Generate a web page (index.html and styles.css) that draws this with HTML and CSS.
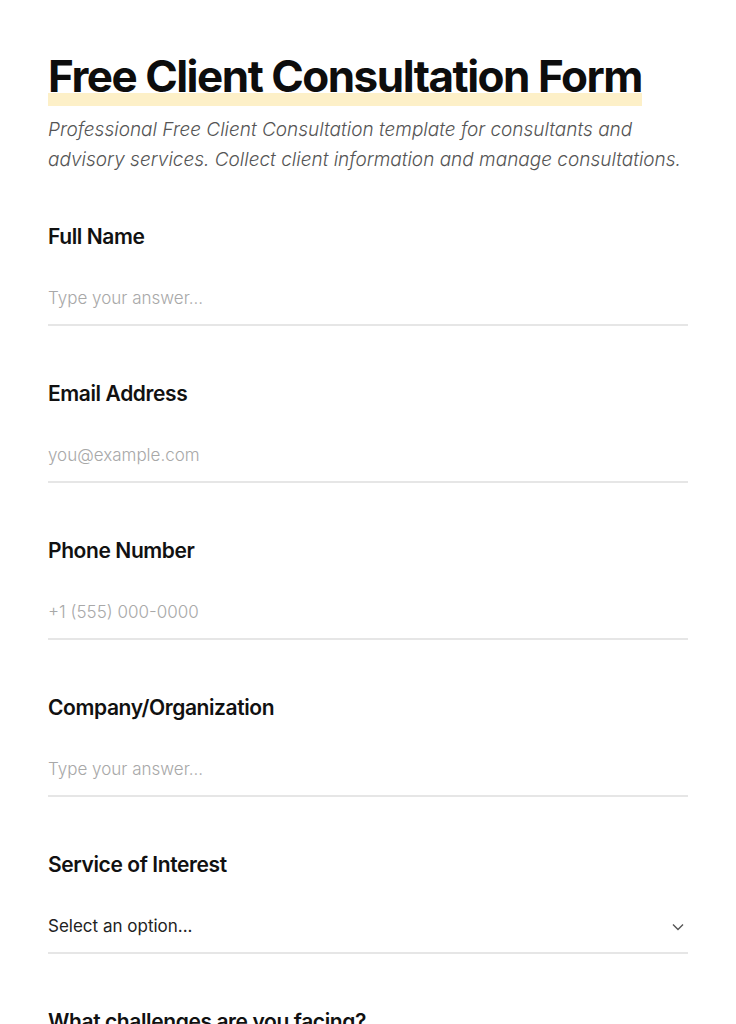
FILE: index.html
```html
<!doctype html>
<html lang="en">
<head>
  <meta charset="utf-8">
  <meta name="viewport" content="width=device-width, initial-scale=1">
  <title>Free Client Consultation Form</title>
  <link rel="stylesheet" href="styles.css">
</head>
<body>
  <div class="form-page">
    <div class="form-head">
      <h1><span class="mark">Free Client Consultation Form</span></h1>
      <p class="intro">Professional Free Client Consultation template for consultants and<br>advisory services. Collect client information and manage consultations.</p>
    </div>

    <div class="field">
      <label for="name">Full Name</label>
      <input id="name" type="text" placeholder="Type your answer...">
    </div>

    <div class="field">
      <label for="email">Email Address</label>
      <input id="email" type="email" placeholder="you@example.com">
    </div>

    <div class="field">
      <label for="phone">Phone Number</label>
      <input id="phone" type="tel" placeholder="+1 (555) 000-0000">
    </div>

    <div class="field">
      <label for="company">Company/Organization</label>
      <input id="company" type="text" placeholder="Type your answer...">
    </div>

    <div class="field">
      <label for="service">Service of Interest</label>
      <div class="select-wrap">
        <select id="service">
          <option>Select an option...</option>
          <option>Strategy</option>
          <option>Operations</option>
        </select>
        <svg class="chevron" width="14" height="14" viewBox="0 0 14 14"><path d="M2 4.5 L7 9.5 L12 4.5" fill="none" stroke="#555" stroke-width="1.4"/></svg>
      </div>
    </div>

    <div class="field">
      <label for="challenges">What challenges are you facing?</label>
      <input id="challenges" type="text" placeholder="Type your answer...">
    </div>
  </div>
</body>
</html>
```

FILE: styles.css
```css
body {
  margin: 0;
  background: #fff;
  font-family: 'Inter', 'Liberation Sans', sans-serif;
  color: #111;
}

.form-page {
  padding: 49px 48px 40px;
  width: 640px;
}

.form-head {
  margin-bottom: 48px;
}

h1 {
  margin: 0 0 12px;
  font-size: 44px;
  line-height: 54px;
  font-weight: 700;
  letter-spacing: -1.5px;
  color: #0d0d0d;
}

.mark {
  padding-bottom: 3px;
  background: linear-gradient(to bottom, transparent 78%, #fdf0c8 78%);
}

.intro {
  margin: 0;
  font-size: 19px;
  line-height: 30px;
  font-style: italic;
  font-weight: 300;
  color: #555;
  white-space: nowrap;
}

.field {
  margin-bottom: 54px;
}

.field label {
  display: block;
  font-size: 21px;
  line-height: 28px;
  font-weight: 600;
  letter-spacing: -0.4px;
  margin-bottom: 22px;
}

.field input,
.field select {
  display: block;
  width: 100%;
  box-sizing: border-box;
  border: 0;
  border-bottom: 2px solid #e6e6e6;
  padding: 13px 0 14px;
  font-family: inherit;
  font-size: 17px;
  line-height: 24px;
  color: #222;
  background: transparent;
  outline: none;
  border-radius: 0;
}

.field input::placeholder {
  color: #a8a8a8;
  font-weight: 300;
}

.select-wrap {
  position: relative;
}

.field select {
  appearance: none;
  -webkit-appearance: none;
  height: 53px;
  font-weight: 400;
}

.chevron {
  position: absolute;
  right: 3px;
  top: 19px;
  pointer-events: none;
}
```
